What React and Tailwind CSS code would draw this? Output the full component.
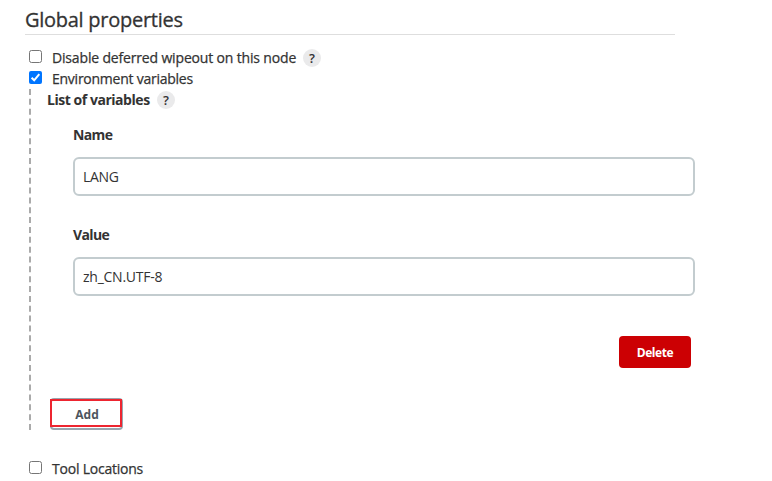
function Checkbox({ checked = false }) {
  return (
    <span
      className={
        checked
          ? "flex h-[13px] w-[13px] shrink-0 items-center justify-center rounded-[2px] bg-[#0075ff]"
          : "block h-[13px] w-[13px] shrink-0 rounded-[2.5px] border border-[#767676] bg-white"
      }
    >
      {checked && (
        <svg width="13" height="13" viewBox="0 0 13 13" fill="none">
          <path d="M2.6 6.7 5.2 9.3 10.3 3.2" stroke="white" strokeWidth="2" />
        </svg>
      )}
    </span>
  );
}

function Help() {
  return (
    <span className="flex h-[18px] w-[18px] shrink-0 items-center justify-center rounded-full bg-[#eaeaeb] text-[13px] leading-[18px] font-semibold">
      ?
    </span>
  );
}

function Field({ label, value, valueClass }) {
  return (
    <div className="w-[622px]">
      <div className="flex h-5 items-center font-bold">
        <span className="tracking-[-0.65px]">{label}</span>
      </div>
      <div className="mt-3 flex h-[39px] items-center rounded-md border-2 border-[#c3cccf] bg-white px-2">
        <span className={valueClass}>{value}</span>
      </div>
    </div>
  );
}

export default function App() {
  return (
    <main className="h-[481px] w-[772px] overflow-hidden bg-white pl-[25px] font-['Open_Sans','Noto_Sans',sans-serif] text-[14px] leading-5 whitespace-nowrap text-[#333]">
      <h1 className="flex h-[35px] w-[650px] items-center border-b border-[#dedede] pt-[5px] text-[20px] font-medium [-webkit-text-stroke:0.3px]">
        <span className="tracking-[-0.27px]">Global properties</span>
      </h1>

      <div className="mt-[13px] flex h-5 pl-1">
        <div className="pt-[2px]"><Checkbox /></div>
        <span className="ml-[10px] w-[251px] font-medium tracking-[-0.165px] [-webkit-text-stroke:0.25px]">Disable deferred wipeout on this node</span>
        <div className="pt-px"><Help /></div>
      </div>
      <div className="mt-px flex h-5 pl-1">
        <div className="pt-[2px]"><Checkbox checked /></div>
        <span className="ml-[10px] font-medium tracking-[-0.25px] [-webkit-text-stroke:0.25px]">Environment variables</span>
      </div>

      <section className="ml-1 h-[341px] border-l-2 border-dashed border-[#aaa] pl-4">
        <div className="flex h-[22px] items-center">
          <span className="w-[110px] font-bold tracking-[-0.46px]">List of variables</span>
          <Help />
        </div>
        <div className="pt-[14px] pl-[26px]">
          <Field label="Name" value="LANG" valueClass="tracking-[-0.3px]" />
          <div className="h-[29px]" />
          <Field label="Value" value="zh_CN.UTF-8" valueClass="tracking-[-0.25px]" />
        </div>
        <div className="mt-10 flex w-[644px] justify-end">
          <button className="flex h-8 w-[72px] items-center justify-center rounded-[4px] bg-[#cc0003] pt-[2px] text-[12px] font-bold text-white">
            <span className="tracking-[-0.4px]">Delete</span>
          </button>
        </div>
        <div className="relative mt-[30px] ml-[3px] h-8 w-[73px]">
          <button className="flex h-8 w-[73px] items-center justify-center rounded-[4px] border-2 border-[#98a5af] bg-white pt-[2px] pl-px text-[12px] font-bold text-[#4d545d]">
            <span>Add</span>
          </button>
          <div className="absolute top-px left-0 h-[28px] w-[72px] border-2 border-[#ed2530]" />
        </div>
      </section>

      <div className="mt-[29px] flex h-5 pl-1">
        <div className="pt-[2px]"><Checkbox /></div>
        <span className="ml-[10px] font-medium tracking-[-0.22px] [-webkit-text-stroke:0.25px]">Tool Locations</span>
      </div>
    </main>
  );
}
